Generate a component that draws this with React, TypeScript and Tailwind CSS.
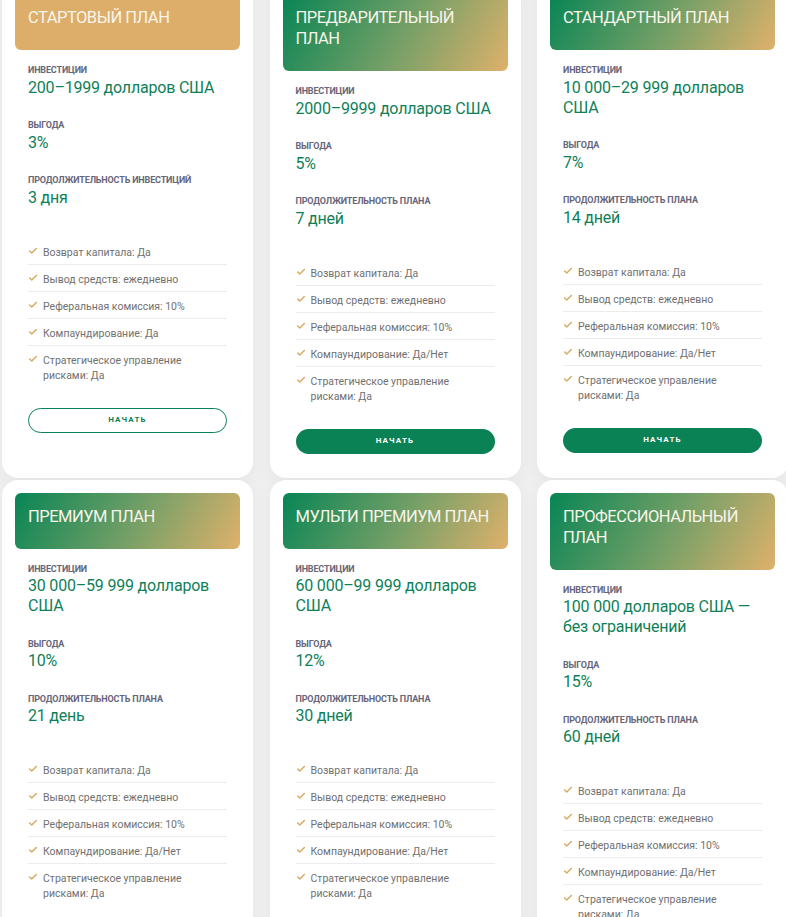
import { Check } from "lucide-react";

type Plan = {
  title: string;
  investment: string;
  profit: string;
  durationLabel: string;
  duration: string;
  compounding: string;
  solid?: boolean;
  outline?: boolean;
};

const plans: Plan[] = [
  {
    title: "Стартовый план",
    investment: "200–1999 долларов США",
    profit: "3%",
    durationLabel: "Продолжительность инвестиций",
    duration: "3 дня",
    compounding: "Да",
    solid: true,
    outline: true,
  },
  {
    title: "Предварительный план",
    investment: "2000–9999 долларов США",
    profit: "5%",
    durationLabel: "Продолжительность плана",
    duration: "7 дней",
    compounding: "Да/Нет",
  },
  {
    title: "Стандартный план",
    investment: "10 000–29 999 долларов США",
    profit: "7%",
    durationLabel: "Продолжительность плана",
    duration: "14 дней",
    compounding: "Да/Нет",
  },
  {
    title: "Премиум план",
    investment: "30 000–59 999 долларов США",
    profit: "10%",
    durationLabel: "Продолжительность плана",
    duration: "21 день",
    compounding: "Да/Нет",
  },
  {
    title: "Мульти премиум план",
    investment: "60 000–99 999 долларов США",
    profit: "12%",
    durationLabel: "Продолжительность плана",
    duration: "30 дней",
    compounding: "Да/Нет",
  },
  {
    title: "Профессиональный план",
    investment: "100 000 долларов США — без ограничений",
    profit: "15%",
    durationLabel: "Продолжительность плана",
    duration: "60 дней",
    compounding: "Да/Нет",
  },
];

function Stat({ label, value }: { label: string; value: string }) {
  return (
    <div>
      <p className="text-[9px] font-bold uppercase leading-[12px] tracking-[-0.15px] text-[#67667a]">
        {label}
      </p>
      <p className="mt-[1.5px] text-[16px] leading-[20px] tracking-[-0.2px] text-[#0f7f58]">{value}</p>
    </div>
  );
}

function PlanCard({ plan }: { plan: Plan }) {
  const features = [
    "Возврат капитала: Да",
    "Вывод средств: ежедневно",
    "Реферальная комиссия: 10%",
    `Компаундирование: ${plan.compounding}`,
    "Стратегическое управление рисками: Да",
  ];

  return (
    <div className="rounded-2xl bg-white p-[13px] shadow-[0_4px_18px_rgba(0,0,0,0.04)]">
      <div
        className={
          plan.solid
            ? "rounded-md bg-[#dcae6a] px-[13px] pb-[22px] pt-[12px]"
            : "rounded-md bg-[linear-gradient(120deg,#078555_0%,#78a067_55%,#dfb16b_100%)] px-[13px] pb-[22px] pt-[12px]"
        }
      >
        <h3 className="mt-[1px] text-[16.5px] uppercase leading-[21px] tracking-[-0.5px] text-[#f8f4ea]">
          {plan.title}
        </h3>
      </div>

      <div className="px-[13px] pb-[11px] pt-[14px]">
        <div className="flex flex-col gap-[21.5px]">
          <Stat label="Инвестиции" value={plan.investment} />
          <Stat label="Выгода" value={plan.profit} />
          <Stat label={plan.durationLabel} value={plan.duration} />
        </div>

        <ul className="mt-[30px]">
          {features.map((feature) => (
            <li
              key={feature}
              className="flex gap-[5px] border-b border-[#ececec] pb-[4px] pt-[7px] last:border-b-0"
            >
              <Check className="mt-[1px] size-[10px] shrink-0 text-[#d8aa62]" strokeWidth={3.5} />
              <span className="text-[10.5px] leading-[15px] text-[#707070]">{feature}</span>
            </li>
          ))}
        </ul>

        <button
          type="button"
          className={
            plan.outline
              ? "mt-[21px] h-[25px] w-full rounded-full border-[1.5px] border-[#0b8157] text-[8px] font-bold tracking-[1.2px] text-[#0b8157]"
              : "mt-[21px] h-[25px] w-full rounded-full bg-[#0a8256] text-[8px] font-bold tracking-[1.2px] text-white"
          }
        >
          НАЧАТЬ
        </button>
      </div>
    </div>
  );
}

export default function App() {
  return (
    <div className="min-h-screen overflow-hidden bg-[#efefef] font-['Roboto',sans-serif]">
      <div className="-mt-[19px] grid grid-cols-[251px_251px_251px] gap-x-[16.5px] gap-y-[2px] pl-[2px]">
        {plans.map((plan) => (
          <PlanCard key={plan.title} plan={plan} />
        ))}
      </div>
    </div>
  );
}
